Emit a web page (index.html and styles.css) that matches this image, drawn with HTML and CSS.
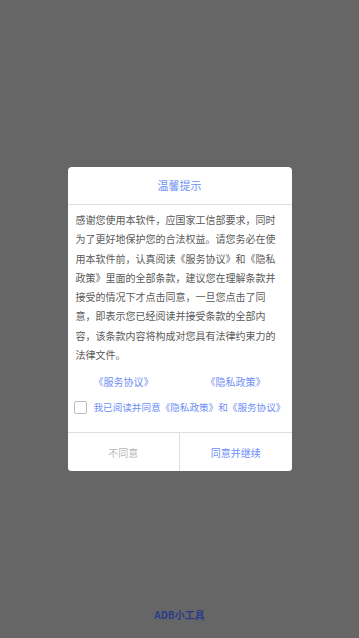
FILE: index.html
```html
<!DOCTYPE html>
<html lang="zh">
<head>
    <meta charset="UTF-8">
    <meta name="viewport" content="width=device-width, initial-scale=1.0">
    <title>ADB小工具</title>
    <link rel="stylesheet" href="styles.css">
</head>
<body>
    <div class="screen">
        <div class="dialog">
            <div class="dialog-title">温馨提示</div>
            <div class="dialog-body">
                <p class="notice">感谢您使用本软件，应国家工信部要求，同时为了更好地保护您的合法权益。请您务必在使用本软件前，认真阅读《服务协议》和《隐私政策》里面的全部条款，建议您在理解条款并接受的情况下才点击同意，一旦您点击了同意，即表示您已经阅读并接受条款的全部内容，该条款内容将构成对您具有法律约束力的法律文件。</p>
                <div class="links">
                    <a href="#" class="link">《服务协议》</a>
                    <a href="#" class="link">《隐私政策》</a>
                </div>
                <label class="agree">
                    <span class="checkbox"></span>
                    <span>我已阅读并同意《隐私政策》和《服务协议》</span>
                </label>
            </div>
            <div class="dialog-buttons">
                <button class="btn btn-cancel">不同意</button>
                <button class="btn btn-ok">同意并继续</button>
            </div>
        </div>
        <div class="footer">ADB小工具</div>
    </div>
</body>
</html>
```

FILE: styles.css
```css
body {
    margin: 0;
    padding: 0;
    background: #666666;
    font-family: 'Noto Sans CJK SC', 'Noto Sans', sans-serif;
}

.screen {
    height: 638px;
    display: flex;
    flex-direction: column;
    align-items: center;
}

.dialog {
    margin-top: 167px;
    width: 224px;
    background: #fff;
    border-radius: 4px;
    overflow: hidden;
}

.dialog-title {
    height: 37px;
    line-height: 37px;
    text-align: center;
    font-size: 11px;
    color: #6f8ff5;
    border-bottom: 1px solid #dedede;
}

.dialog-body {
    padding: 5px 8px 18px;
}

.notice {
    margin: 0;
    font-size: 10px;
    line-height: 19.3px;
    color: #5a5a5a;
}

.links {
    display: grid;
    grid-template-columns: 1fr 1fr;
    margin: 10px -8px 0;
    text-align: center;
}

.link {
    font-size: 10px;
    color: #6f8ff5;
    text-decoration: none;
}

.agree {
    display: flex;
    align-items: center;
    gap: 7px;
    margin-top: 11px;
    margin-left: -2px;
    font-size: 9.6px;
    color: #6f8ff5;
    white-space: nowrap;
}

.checkbox {
    width: 11px;
    height: 11px;
    border: 1px solid #bdbdbd;
    border-radius: 2px;
    flex-shrink: 0;
}

.dialog-buttons {
    display: flex;
    border-top: 1px solid #dedede;
    height: 38px;
}

.btn {
    flex: 1;
    border: none;
    background: #fff;
    font-family: inherit;
    font-size: 10px;
    padding: 0;
}

.btn-cancel {
    color: #b8b8b8;
    border-right: 1px solid #dedede;
}

.btn-ok {
    color: #6f8ff5;
}

.footer {
    margin-top: auto;
    margin-bottom: 16px;
    font-size: 10px;
    font-weight: bold;
    color: #2b3b8c;
}
```
